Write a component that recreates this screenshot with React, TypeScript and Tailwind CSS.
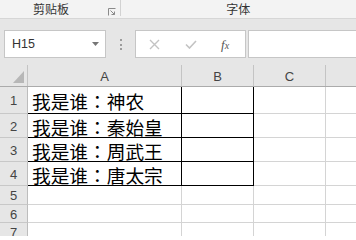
import React from "react";

type Row = { n: number; h: string; a?: string; boxed?: boolean };

const rows: Row[] = [
  { n: 1, h: "h-[27px]", a: "我是谁：神农", boxed: true },
  { n: 2, h: "h-[24px]", a: "我是谁：秦始皇", boxed: true },
  { n: 3, h: "h-[24px]", a: "我是谁：周武王", boxed: true },
  { n: 4, h: "h-[24px]", a: "我是谁：唐太宗", boxed: true },
  { n: 5, h: "h-[19px]" },
  { n: 6, h: "h-[18px]" },
  { n: 7, h: "h-[18px]" },
];

const latin = "font-['Liberation_Sans',Arial,sans-serif]";
const cjk = "font-['Noto_Sans_CJK_SC','Noto_Sans',sans-serif]";
// the cell text uses a family that centres the full-width colon, as in the sheet
const cellFont = "font-['Noto_Sans_CJK_TC','Noto_Sans_CJK_SC',sans-serif]";

function Launcher() {
  return (
    <svg width="8" height="8" viewBox="0 0 8 8" className="text-[#8a8a8a]">
      <path d="M0.5 7.5V0.5H7.5" fill="none" stroke="currentColor" strokeWidth="1" />
      <path d="M2.5 2.5L6.5 6.5M6.5 3.5V6.5H3.5" fill="none" stroke="currentColor" strokeWidth="1" />
    </svg>
  );
}

function Ribbon() {
  return (
    <div className={`flex h-[19px] bg-[#f3f3f3] border-b border-[#d6d6d6] ${cjk}`}>
      <div className="flex items-center w-[122px] h-full">
        <span className="pl-[33px] text-[12px] leading-none text-[#333]">剪贴板</span>
        <span className="ml-auto mr-[4px] mt-[5px]">
          <Launcher />
        </span>
      </div>
      <div className="w-px h-[16px] bg-[#d2d2d2]" />
      <div className="flex items-center justify-center w-[240px] h-full">
        <span className="text-[12px] leading-none text-[#333]">字体</span>
      </div>
    </div>
  );
}

function FormulaBar() {
  return (
    <div className="flex items-start h-[46px] bg-[#e6e6e6] pt-[11px]">
      <div className={`ml-[4px] w-[102px] h-[28px] bg-white border border-[#c6c6c6] flex items-center ${latin}`}>
        <span className="pl-[7px] text-[12.5px] text-[#333]">H15</span>
        <svg width="7" height="4" viewBox="0 0 7 4" className="ml-auto mr-[6px]">
          <path d="M0 0H7L3.5 4Z" fill="#767676" />
        </svg>
      </div>
      <div className="ml-[14px] mt-[9px] flex flex-col gap-[2.5px]">
        <div className="w-[2px] h-[2px] bg-[#9c9c9c]" />
        <div className="w-[2px] h-[2px] bg-[#9c9c9c]" />
        <div className="w-[2px] h-[2px] bg-[#9c9c9c]" />
      </div>
      <div className="ml-[13px] w-[111px] h-[28px] bg-white border border-[#c6c6c6] flex items-center">
        <svg width="11" height="11" viewBox="0 0 11 11" className="ml-[13px]">
          <path d="M1 1L10 10M10 1L1 10" stroke="#c3c3c3" strokeWidth="1.4" />
        </svg>
        <svg width="12" height="9" viewBox="0 0 12 9" className="ml-[25px]">
          <path d="M1 4.5L4.5 8L11 1" fill="none" stroke="#c3c3c3" strokeWidth="1.6" />
        </svg>
        <span className="ml-[24px] font-['Liberation_Serif',serif] italic text-[13px] text-[#555] leading-none">
          f<span className="text-[10px]">x</span>
        </span>
      </div>
      <div className="ml-[2px] flex-1 h-[28px] bg-white border border-[#c6c6c6] border-r-0" />
    </div>
  );
}

function HeaderRow() {
  return (
    <div className={`flex h-[22px] bg-[#e6e6e6] border-b border-[#ababab] text-[13px] text-[#444] ${latin}`}>
      <div className="w-[28px] border-r border-[#c4c4c4] flex items-end justify-end pr-[3px] pb-[3px]">
        <svg width="11" height="12" viewBox="0 0 11 12">
          <path d="M11 0V12H0Z" fill="#b7b7b7" />
        </svg>
      </div>
      <div className="w-[154px] border-r border-[#c4c4c4] flex items-center justify-center pt-[2px]">A</div>
      <div className="w-[72px] border-r border-[#c4c4c4] flex items-center justify-center pt-[2px]">B</div>
      <div className="w-[72px] border-r border-[#c4c4c4] flex items-center justify-center pt-[2px]">C</div>
      <div className="flex-1" />
    </div>
  );
}

function SheetRow({ row }: { row: Row }) {
  const edge = row.boxed ? "border-black" : "border-[#d4d4d4]";
  return (
    <div className={`flex ${row.h}`}>
      <div
        className={`w-[28px] bg-[#e6e6e6] border-r border-b border-r-[#bdbdbd] border-b-[#c8c8c8] flex items-center justify-center pt-[2px] text-[13px] text-[#444] ${latin}`}
      >
        {row.n}
      </div>
      <div className={`w-[154px] border-r border-b ${edge} flex items-center pl-[4px] pt-[1px] ${cellFont}`}>
        <span className="text-[18.7px] leading-[19px] text-black whitespace-nowrap">{row.a}</span>
      </div>
      <div className={`w-[72px] border-r border-b ${edge}`} />
      <div className="w-[72px] border-r border-b border-[#d4d4d4]" />
      <div className="flex-1 border-b border-[#d4d4d4]" />
    </div>
  );
}

export default function App() {
  return (
    <div className="w-[356px] h-[236px] overflow-hidden bg-white">
      <Ribbon />
      <FormulaBar />
      <HeaderRow />
      {rows.map((r) => (
        <SheetRow key={r.n} row={r} />
      ))}
    </div>
  );
}
